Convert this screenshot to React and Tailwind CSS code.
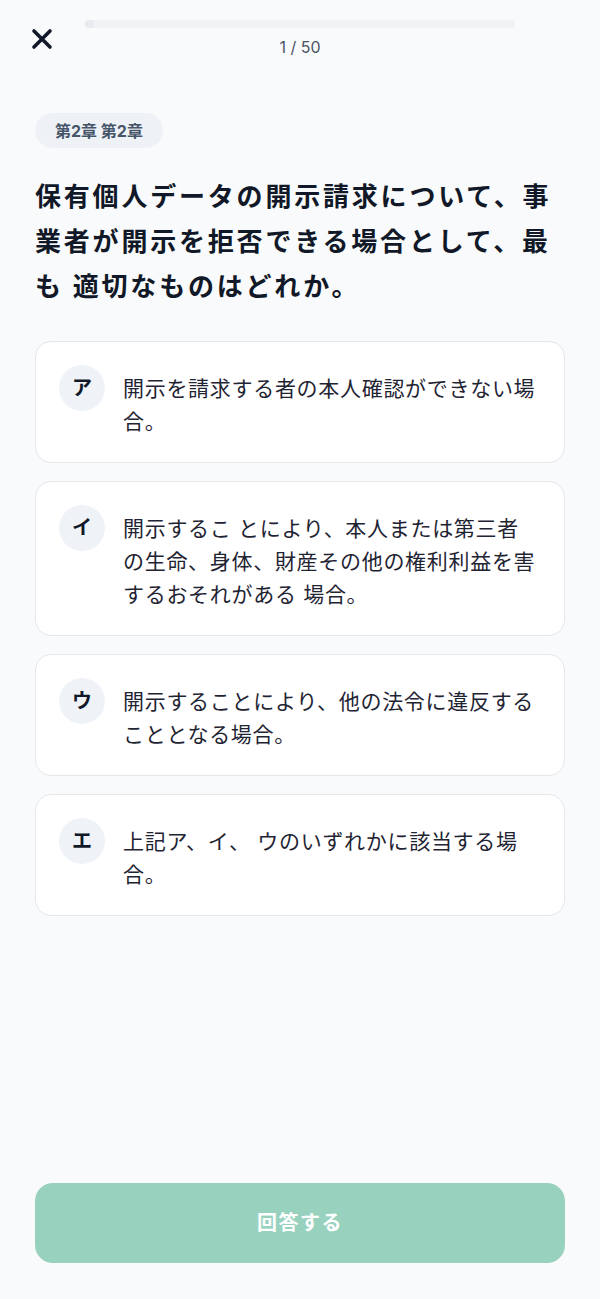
import React from "react";

const options = [
  { key: "ア", lines: ["開示を請求する者の本人確認ができない場", "合。"] },
  {
    key: "イ",
    lines: [
      "開示するこ とにより、本人または第三者",
      "の生命、身体、財産その他の権利利益を害",
      "するおそれがある 場合。",
    ],
  },
  { key: "ウ", lines: ["開示することにより、他の法令に違反する", "こととなる場合。"] },
  { key: "エ", lines: ["上記ア、イ、 ウのいずれかに該当する場", "合。"] },
];

export default function App() {
  return (
    <div
      className="min-h-[1299px] w-full bg-[#f9fafb] flex flex-col"
      style={{ fontFamily: 'Inter, "Noto Sans CJK JP", sans-serif' }}
    >
      {/* Header */}
      <div className="flex items-start pt-[20px]">
        <div className="w-[85px] flex pl-[31px] pt-[8px]">
          <svg width="22" height="22" viewBox="0 0 22 22" fill="none">
            <path
              d="M3 3L19 19M19 3L3 19"
              stroke="#111827"
              strokeWidth="3.6"
              strokeLinecap="round"
            />
          </svg>
        </div>
        <div className="w-[430px] flex flex-col items-center">
          <div className="w-full h-[8px] rounded-full bg-[#f0f2f6]">
            <div className="h-full w-[2%] rounded-full bg-[#e8ecf1]" />
          </div>
          <div className="mt-[7px] text-[16px] leading-[24px] text-[#4b5563]">1 / 50</div>
        </div>
        <div className="w-[85px]" />
      </div>

      {/* Content */}
      <div className="px-[35px] flex flex-col">
        <div className="mt-[54px] self-start h-[35px] px-[20px] flex items-center rounded-full bg-[#eef2f7] text-[16px] font-bold text-[#475569]">
          第2章 第2章
        </div>

        <h1 className="mt-[26px] text-[26px] leading-[45px] font-bold tracking-[2.8px] text-[#111827]">
          保有個人データの開示請求について、事
          <br />
          業者が開示を拒否できる場合として、最
          <br />
          も 適切なものはどれか。
        </h1>

        <div className="mt-[32px] flex flex-col gap-[18px]">
          {options.map((o) => (
            <div
              key={o.key}
              className="flex items-start gap-[18px] rounded-2xl border border-[#e5e7eb] bg-white pt-[23px] pb-[24px] px-[23px]"
            >
              <div className="w-[46px] h-[46px] shrink-0 rounded-full bg-[#eff3f8] flex items-center justify-center text-[20px] font-bold text-[#111827]">
                {o.key}
              </div>
              <div className="mt-[7px] text-[21px] leading-[33px] tracking-[0.7px] text-[#1f2433]">
                {o.lines.map((l, i) => (
                  <div key={i} className="whitespace-pre">
                    {l}
                  </div>
                ))}
              </div>
            </div>
          ))}
        </div>
      </div>

      <div className="flex-1" />

      {/* Footer button */}
      <div className="px-[35px] pb-[36px]">
        <button className="w-full h-[80px] rounded-[18px] bg-[#98d2bf] text-white text-[20px] font-bold tracking-[1.5px] flex items-center justify-center">
          回答する
        </button>
      </div>
    </div>
  );
}
